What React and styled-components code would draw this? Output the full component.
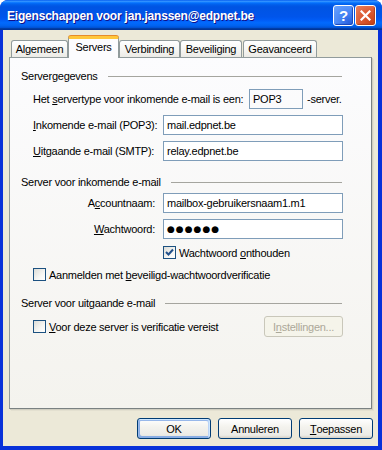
import React from 'react'
import styled, { createGlobalStyle } from 'styled-components'

const GlobalStyle = createGlobalStyle`
  html, body {
    margin: 0;
    background: #ffffff;
  }
  body {
    font-family: "Liberation Sans", Arial, sans-serif;
    font-size: 11px;
    letter-spacing: -0.25px;
    color: #000;
    white-space: nowrap;
  }
`

const tabs = [
  { label: 'Algemeen', width: 57 },
  { label: 'Servers', width: 51, active: true },
  { label: 'Verbinding', width: 61 },
  { label: 'Beveiliging', width: 62 },
  { label: 'Geavanceerd', width: 74 }
]

export default function App() {
  return (
    <>
      <GlobalStyle />
      <Window>
        <TitleBar>
          <Title>Eigenschappen voor jan.janssen@edpnet.be</Title>
          <TitleButtons>
            <HelpButton>?</HelpButton>
            <CloseButton>
              <svg width="11" height="11" viewBox="0 0 11 11">
                <path d="M1.5 1.5 L9.5 9.5 M9.5 1.5 L1.5 9.5" stroke="#fff" strokeWidth="2.2" strokeLinecap="square" />
              </svg>
            </CloseButton>
          </TitleButtons>
        </TitleBar>
        <Frame>
          <TabStrip>
            {tabs.map(t => (
              <Tab key={t.label} $w={t.width} $active={t.active}>
                {t.label}
              </Tab>
            ))}
          </TabStrip>
          <Panel>
            <GroupHeader>
              <span>Servergegevens</span>
              <Rule />
            </GroupHeader>

            <TypeRow>
              <TypeLabel>
                Het <Key>s</Key>ervertype voor inkomende e-mail is een:
              </TypeLabel>
              <TypeBox>POP3</TypeBox>
              <Suffix>-server.</Suffix>
            </TypeRow>

            <FieldRow $top={6}>
              <FieldLabel>
                <Key>I</Key>nkomende e-mail (POP3):
              </FieldLabel>
              <Input>mail.edpnet.be</Input>
            </FieldRow>
            <FieldRow $top={6}>
              <FieldLabel>
                <Key>U</Key>itgaande e-mail (SMTP):
              </FieldLabel>
              <Input>relay.edpnet.be</Input>
            </FieldRow>

            <GroupHeader $top={14}>
              <span>Server voor inkomende e-mail</span>
              <Rule />
            </GroupHeader>

            <FieldRow $top={5}>
              <FieldLabel $right>
                A<Key>c</Key>countnaam:
              </FieldLabel>
              <Input>mailbox-gebruikersnaam1.m1</Input>
            </FieldRow>
            <FieldRow $top={6}>
              <FieldLabel $right>
                <Key>W</Key>achtwoord:
              </FieldLabel>
              <Input>
                <Dots>●●●●●●</Dots>
              </Input>
            </FieldRow>
            <FieldRow $top={7}>
              <span />
              <CheckLine>
                <CheckBox $checked>
                  <svg width="9" height="9" viewBox="0 0 9 9">
                    <path d="M1 4 L3.5 6.5 L8 1.5" fill="none" stroke="#21508a" strokeWidth="2" />
                  </svg>
                </CheckBox>
                <span>
                  Wachtwoord <Key>o</Key>nthouden
                </span>
              </CheckLine>
            </FieldRow>
            <CheckRow $top={9}>
              <CheckLine>
                <CheckBox />
                <span>
                  Aanmelden met <Key>b</Key>eveiligd-wachtwoordverificatie
                </span>
              </CheckLine>
            </CheckRow>

            <GroupHeader $top={15}>
              <span>Server voor uitgaande e-mail</span>
              <Rule />
            </GroupHeader>

            <CheckRow $top={7}>
              <CheckLine>
                <CheckBox />
                <span>
                  <Key>V</Key>oor deze server is verificatie vereist
                </span>
              </CheckLine>
              <DisabledButton>
                I<Key>n</Key>stellingen...
              </DisabledButton>
            </CheckRow>
          </Panel>

          <ButtonBar>
            <Button $default>OK</Button>
            <Button>Annuleren</Button>
            <Button>
              <Key>T</Key>oepassen
            </Button>
          </ButtonBar>
        </Frame>
      </Window>
    </>
  )
}

const Window = styled.div`
  width: 382px;
  height: 450px;
  display: flex;
  flex-direction: column;
  border-radius: 8px 8px 0 0;
  overflow: hidden;
  background: #0831d9;
`

const TitleBar = styled.div`
  height: 30px;
  flex: none;
  display: flex;
  align-items: center;
  justify-content: space-between;
  padding: 0 6px 0 7px;
  background: linear-gradient(
    180deg,
    #0058ee 0%,
    #3593ff 4%,
    #288eff 6%,
    #127dff 8%,
    #036ffc 10%,
    #0262ee 14%,
    #0057e5 20%,
    #0054e3 24%,
    #0055eb 56%,
    #005bf5 66%,
    #026afe 76%,
    #0062ef 86%,
    #0052d6 92%,
    #0040ab 94%,
    #003092 100%
  );
`

const Title = styled.div`
  color: #fff;
  font-family: "Liberation Sans", Arial, sans-serif;
  font-weight: bold;
  font-size: 12px;
  letter-spacing: -0.2px;
  text-shadow: 1px 1px #0f1089;
  padding-top: 1px;
`

const TitleButtons = styled.div`
  display: flex;
  gap: 1px;
  padding-top: 1px;
`

const CaptionButton = styled.div`
  width: 21px;
  height: 21px;
  box-sizing: border-box;
  border: 1px solid #fff;
  border-radius: 3px;
  display: flex;
  align-items: center;
  justify-content: center;
  color: #fff;
`

const HelpButton = styled(CaptionButton)`
  background: radial-gradient(circle at 80% 85%, #2a62e0 0%, #4886f5 45%, #6aa4ff 100%);
  font-family: "Liberation Sans", Arial, sans-serif;
  font-weight: bold;
  font-size: 15px;
  box-shadow: inset -1px -1px 1px #1a45b8;
`

const CloseButton = styled(CaptionButton)`
  background: radial-gradient(circle at 85% 90%, #cc4419 0%, #dc5a33 50%, #e8825f 100%);
  box-shadow: inset -1px -1px 1px #b0401c;
`

const Frame = styled.div`
  flex: 1;
  display: flex;
  flex-direction: column;
  margin: 0 4px 4px 3px;
  background: #ece9d8;
  padding: 6px 0 0 6px;
`

const TabStrip = styled.div`
  display: flex;
  align-items: flex-end;
  height: 21px;
  padding-left: 2px;
`

const Tab = styled.div`
  width: ${p => p.$w}px;
  box-sizing: border-box;
  height: ${p => (p.$active ? 22 : 17)}px;
  margin-bottom: ${p => (p.$active ? -1 : 0)}px;
  margin-right: ${p => (p.$w === 62 ? 1 : 0)}px;
  border: 1px solid #919b9c;
  border-bottom: none;
  border-top: ${p => (p.$active ? '3px solid #ffc73c' : '1px solid #919b9c')};
  border-radius: 3px 3px 0 0;
  background: ${p => (p.$active ? '#fcfcfe' : 'linear-gradient(180deg, #ffffff 0%, #f7f7f4 50%, #ecebe6 100%)')};
  box-shadow: ${p => (p.$active ? 'inset 0 -1px 0 #fcfcfe, 0 -1px 0 #e68b2c' : 'none')};
  position: relative;
  z-index: ${p => (p.$active ? 2 : 1)};
  display: flex;
  align-items: center;
  justify-content: center;
  padding-bottom: ${p => (p.$active ? 3 : 0)}px;
  font-size: 11px;
`

const Panel = styled.div`
  width: 363px;
  height: 352px;
  box-sizing: border-box;
  border: 1px solid #919b9c;
  border-right-color: #7a8182;
  border-bottom-color: #7a8182;
  box-shadow: 1px 1px 0 #d0cec1, 2px 2px 0 #e3e0d0;
  background: linear-gradient(180deg, #fcfcfe 0%, #f4f3ee 100%);
  padding: 11px 27px 0 11px;
  display: flex;
  flex-direction: column;
`

const GroupHeader = styled.div`
  display: flex;
  align-items: center;
  gap: 10px;
  height: 13px;
  margin-top: ${p => p.$top || 0}px;
  margin-right: 2px;
`

const Rule = styled.div`
  flex: 1;
  height: 1px;
  background: #a5a59f;
  margin-top: 2px;
`

const Key = styled.span`
  text-decoration: underline;
`

const TypeRow = styled.div`
  display: flex;
  align-items: center;
  height: 20px;
  margin-top: 7px;
  padding-left: 12px;
`

const TypeLabel = styled.div`
  width: 216px;
  flex: none;
`

const TypeBox = styled.div`
  width: 54px;
  height: 20px;
  box-sizing: border-box;
  border: 1px solid #7f9db9;
  padding: 0 0 0 3px;
  display: flex;
  align-items: center;
  font-size: 11px;
`

const Suffix = styled.span`
  margin-left: 4px;
`

const FieldRow = styled.div`
  display: grid;
  grid-template-columns: 130px 180px;
  align-items: center;
  min-height: 13px;
  margin-top: ${p => p.$top || 0}px;
  padding-left: 12px;
`

const FieldLabel = styled.div`
  text-align: ${p => (p.$right ? 'right' : 'left')};
  padding-right: ${p => (p.$right ? 8 : 0)}px;
`

const Input = styled.div`
  height: 20px;
  box-sizing: border-box;
  border: 1px solid #7f9db9;
  background: #fff;
  padding-left: 3px;
  display: flex;
  align-items: center;
`

const Dots = styled.span`
  font-size: 9px;
  letter-spacing: 1px;
  font-family: "DejaVu Sans", sans-serif;
`

const CheckRow = styled.div`
  display: flex;
  align-items: center;
  justify-content: space-between;
  margin-top: ${p => p.$top || 0}px;
  padding-left: 12px;
  min-height: 13px;
`

const CheckLine = styled.div`
  display: flex;
  align-items: center;
  gap: 3px;
`

const CheckBox = styled.div`
  width: 13px;
  height: 13px;
  box-sizing: border-box;
  border: 1px solid #1c5180;
  background: linear-gradient(135deg, #dcdcd7 0%, #f6f6f3 60%, #ffffff 100%);
  display: flex;
  align-items: center;
  justify-content: center;
`

const DisabledButton = styled.div`
  width: 79px;
  height: 21px;
  box-sizing: border-box;
  border: 1px solid #c9c7ba;
  border-radius: 3px;
  background: #f5f4ea;
  color: #aca899;
  display: flex;
  align-items: center;
  justify-content: center;
  margin-right: 1px;
`

const ButtonBar = styled.div`
  display: flex;
  justify-content: flex-end;
  gap: 7px;
  margin-top: 9px;
  padding-right: 5px;
`

const Button = styled.div`
  width: 74px;
  height: 21px;
  box-sizing: border-box;
  border: 1px solid #003c74;
  border-radius: 3px;
  background: linear-gradient(180deg, #ffffff 0%, #f4f3ee 40%, #ecebe6 85%, #d6d0c5 100%);
  box-shadow: ${p =>
    p.$default
      ? 'inset -1px 1px #cee7ff, inset 1px 2px #98b8ea, inset -2px 2px #bcd4f6, inset 1px -1px #89ade4, inset 2px -2px #89ade4'
      : 'none'};
  display: flex;
  align-items: center;
  justify-content: center;
`
